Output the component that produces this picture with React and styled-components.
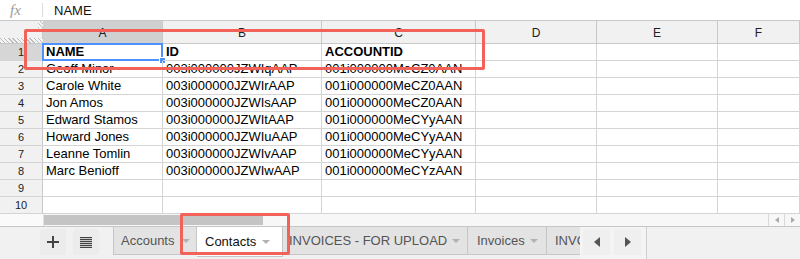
import React from "react";
import styled, { createGlobalStyle, css } from "styled-components";

const Global = createGlobalStyle`
  html, body { margin: 0; padding: 0; background: #fff; }
  body { font-family: "Liberation Sans", Arial, sans-serif; width: 800px; height: 259px; overflow: hidden; }
`;

const Page = styled.div`
  position: relative;
  width: 800px;
  height: 259px;
  display: flex;
  flex-direction: column;
  overflow: hidden;
`;

const FormulaBar = styled.div`
  height: 20px;
  display: flex;
  align-items: center;
  background: #fff;
`;

const Fx = styled.span`
  width: 43px;
  box-sizing: border-box;
  padding-left: 10px;
  font-family: "Liberation Serif", serif;
  font-style: italic;
  font-size: 15px;
  color: #9a9a9a;
  border-right: 1px solid #dcdcdc;
  line-height: 14px;
  height: 14px;
`;

const FormulaText = styled.span`
  padding-left: 11px;
  font-size: 13px;
  color: #111;
`;

const COLS = "43px 120px 159px 154px 121px 121px 82px";

const Grid = styled.div`
  display: grid;
  grid-template-columns: ${COLS};
  grid-auto-rows: 17px;
  grid-template-rows: 24px;
`;

const Cell = styled.div`
  position: relative;
  box-sizing: border-box;
  border-right: 1px solid #d4d4d4;
  border-bottom: 1px solid #d4d4d4;
  font-size: 13px;
  line-height: 16px;
  padding-left: 3px;
  color: #000;
  white-space: nowrap;
  overflow: visible;
  ${(p) => p.$bold && css`font-weight: bold;`}
`;

const ColHead = styled.div`
  position: relative;
  box-sizing: border-box;
  background: ${(p) => (p.$sel ? "#d0d0d0" : "#f1f1f1")};
  border-top: 1px solid #c8c8c8;
  border-right: 1px solid #c8c8c8;
  border-bottom: 1px solid #c8c8c8;
  font-size: 12px;
  color: #222;
  display: flex;
  align-items: center;
  justify-content: center;
  padding-top: 1px;
`;

const Corner = styled(ColHead)`
  background: #f1f1f1;
  &::before {
    content: "";
    position: absolute;
    left: 0;
    right: -1px;
    bottom: 0;
    height: 5px;
    background: repeating-linear-gradient(45deg, #bdbdbd 0 1px, #f4f4f4 1px 3px);
  }
  &::after {
    content: "";
    position: absolute;
    right: -1px;
    top: 0;
    width: 5px;
    height: 7px;
    background: repeating-linear-gradient(45deg, #bdbdbd 0 1px, #f4f4f4 1px 3px);
  }
`;

const RowHead = styled.div`
  box-sizing: border-box;
  background: ${(p) => (p.$sel ? "#d6d6d6" : "#f1f1f1")};
  border-right: 1px solid #c8c8c8;
  border-bottom: 1px solid #d4d4d4;
  font-size: 11px;
  color: #222;
  display: flex;
  align-items: center;
  justify-content: center;
`;

const Selection = styled.div`
  position: absolute;
  left: -1px;
  top: -1px;
  right: -1px;
  bottom: -1px;
  border: 2px solid #4d90fe;
  pointer-events: none;
  &::after {
    content: "";
    position: absolute;
    right: -5px;
    bottom: -5px;
    width: 5px;
    height: 5px;
    background: #4d90fe;
    border: 1px solid #fff;
  }
`;

const ScrollRow = styled.div`
  height: 12px;
  display: flex;
  background: #fafafa;
`;

const ScrollGutter = styled.div`
  width: 43px;
  border-right: 1px solid #e0e0e0;
  background: #fafafa;
`;

const ScrollTrack = styled.div`
  flex: 1;
  display: flex;
  align-items: center;
  background: #f7f7f7;
`;

const Thumb = styled.div`
  width: 219px;
  height: 10px;
  background: #c4c4c4;
`;

const TrackFill = styled.div`
  flex: 1;
`;

const MiniArrow = styled.div`
  width: 16px;
  height: 12px;
  box-sizing: border-box;
  border-left: 1px solid #d8d8d8;
  display: flex;
  align-items: center;
  justify-content: center;
  &::before {
    content: "";
    border-top: 3px solid transparent;
    border-bottom: 3px solid transparent;
    ${(p) =>
      p.$dir === "left"
        ? css`border-right: 4px solid #aaa;`
        : css`border-left: 4px solid #aaa;`}
  }
`;

const TabBar = styled.div`
  height: 33px;
  box-sizing: border-box;
  border-top: 1px solid #c6c6c6;
  background: #f1f1f1;
  display: flex;
  align-items: flex-start;
`;

const LeftButtons = styled.div`
  display: flex;
  gap: 7px;
  padding: 2px 14px 0 40px;
`;

const IconButton = styled.div`
  width: 26px;
  height: 26px;
  background: #ececec;
  border-radius: 2px;
  display: flex;
  align-items: center;
  justify-content: center;
  color: #444;
`;

const Tabs = styled.div`
  display: flex;
  width: 467px;
  overflow: hidden;
  flex-shrink: 0;
`;

const Tab = styled.div`
  box-sizing: border-box;
  width: ${(p) => p.$w}px;
  height: ${(p) => (p.$active ? "31px" : "29px")};
  margin-top: -1px;
  display: flex;
  align-items: center;
  padding: 0 ${(p) => p.$pr || 7}px 0 ${(p) => p.$pl || 7}px;
  flex-shrink: 0;
  background: ${(p) => (p.$active ? "#fff" : "#e3e3e3")};
  border: 1px solid #c6c6c6;
  border-top: none;
  border-left: ${(p) => (p.$first ? "1px solid #c6c6c6" : "none")};
  font-size: 13px;
  color: ${(p) => (p.$active ? "#111" : "#555")};
  white-space: nowrap;
  overflow: hidden;
`;

const Caret = styled.span`
  display: inline-block;
  width: 0;
  height: 0;
  margin-left: auto;
  border-left: 4px solid transparent;
  border-right: 4px solid transparent;
  border-top: 4px solid #b3b3b3;
  margin-top: 1px;
  flex-shrink: 0;
`;

const NavArea = styled.div`
  width: 67px;
  height: 32px;
  box-sizing: border-box;
  background: #f4f4f4;
  border-right: 1px solid #cfcfcf;
  display: flex;
  gap: 4px;
  padding: 2px 0 0 3px;
`;

const NavButton = styled.div`
  width: 27px;
  height: 26px;
  background: #efefef;
  display: flex;
  align-items: center;
  justify-content: center;
  &::before {
    content: "";
    border-top: 5px solid transparent;
    border-bottom: 5px solid transparent;
    ${(p) =>
      p.$dir === "left"
        ? css`border-right: 6px solid #555;`
        : css`border-left: 6px solid #555;`}
  }
`;

const Highlight = styled.div`
  position: absolute;
  box-sizing: border-box;
  border: 3px solid #f2615a;
  border-radius: 2px;
  pointer-events: none;
  left: ${(p) => p.$x}px;
  top: ${(p) => p.$y}px;
  width: ${(p) => p.$w}px;
  height: ${(p) => p.$h}px;
`;

const data = [
  ["NAME", "ID", "ACCOUNTID"],
  ["Geoff Minor", "003i000000JZWIqAAP", "001i000000MeCZ0AAN"],
  ["Carole White", "003i000000JZWIrAAP", "001i000000MeCZ0AAN"],
  ["Jon Amos", "003i000000JZWIsAAP", "001i000000MeCZ0AAN"],
  ["Edward Stamos", "003i000000JZWItAAP", "001i000000MeCYyAAN"],
  ["Howard Jones", "003i000000JZWIuAAP", "001i000000MeCYyAAN"],
  ["Leanne Tomlin", "003i000000JZWIvAAP", "001i000000MeCYyAAN"],
  ["Marc Benioff", "003i000000JZWIwAAP", "001i000000MeCYzAAN"],
  ["", "", ""],
  ["", "", ""],
];

const colLetters = ["A", "B", "C", "D", "E", "F"];

const tabs = [
  { name: "Accounts", w: 84, pl: 7, pr: 6, first: true },
  { name: "Contacts", w: 86, pl: 8, pr: 12, active: true },
  { name: "INVOICES - FOR UPLOAD", w: 185, pl: 6, pr: 7 },
  { name: "Invoices", w: 79, pl: 9, pr: 8 },
  { name: "INVOICES", w: 90, pl: 8, pr: 7 },
];

const PlusIcon = () => (
  <svg width="12" height="12" viewBox="0 0 12 12">
    <rect x="5" y="0" width="2" height="12" fill="#444" />
    <rect x="0" y="5" width="12" height="2" fill="#444" />
  </svg>
);

const ListIcon = () => (
  <svg width="12" height="11" viewBox="0 0 12 11">
    {[0, 2, 4, 6, 8, 10].map((y) => (
      <rect key={y} x="0" y={y} width="12" height="1.2" fill="#444" />
    ))}
  </svg>
);

export default function App() {
  return (
    <>
      <Global />
      <Page>
        <FormulaBar>
          <Fx>fx</Fx>
          <FormulaText>NAME</FormulaText>
        </FormulaBar>
        <Grid>
          <Corner />
          {colLetters.map((l, i) => (
            <ColHead key={l} $sel={i === 0}>
              {l}
            </ColHead>
          ))}
          {data.map((row, r) => (
            <React.Fragment key={r}>
              <RowHead $sel={r === 0}>{r + 1}</RowHead>
              {row.map((v, c) => (
                <Cell key={c} $bold={r === 0}>
                  {v}
                  {r === 0 && c === 0 && <Selection />}
                </Cell>
              ))}
              <Cell />
              <Cell />
              <Cell />
            </React.Fragment>
          ))}
        </Grid>
        <ScrollRow>
          <ScrollGutter />
          <ScrollTrack>
            <Thumb />
            <TrackFill />
            <MiniArrow $dir="left" />
            <MiniArrow $dir="right" />
          </ScrollTrack>
        </ScrollRow>
        <TabBar>
          <LeftButtons>
            <IconButton>
              <PlusIcon />
            </IconButton>
            <IconButton>
              <ListIcon />
            </IconButton>
          </LeftButtons>
          <Tabs>
            {tabs.map((t) => (
              <Tab
                key={t.name}
                $w={t.w}
                $pl={t.pl}
                $pr={t.pr}
                $first={t.first}
                $active={t.active}
              >
                {t.name}
                <Caret />
              </Tab>
            ))}
          </Tabs>
          <NavArea>
            <NavButton $dir="left" />
            <NavButton $dir="right" />
          </NavArea>
        </TabBar>
        <Highlight $x={24} $y={29} $w={461} $h={41} />
        <Highlight $x={180} $y={213} $w={110} $h={42} />
      </Page>
    </>
  );
}
